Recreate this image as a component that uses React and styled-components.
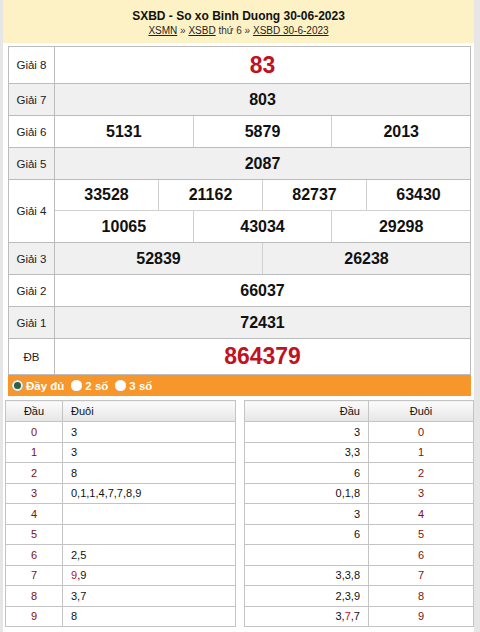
import styled, { createGlobalStyle } from "styled-components";

const GlobalStyle = createGlobalStyle`
  html, body {
    margin: 0;
    padding: 0;
    background: #e6e6e6;
  }
  body {
    font-family: "Liberation Sans", Arial, sans-serif;
  }
`;

const results = [
  { label: "Giải 8", lines: [["83"]], big: true, h: [36] },
  { label: "Giải 7", lines: [["803"]] },
  { label: "Giải 6", lines: [["5131", "5879", "2013"]] },
  { label: "Giải 5", lines: [["2087"]] },
  {
    label: "Giải 4",
    lines: [
      ["33528", "21162", "82737", "63430"],
      ["10065", "43034", "29298"],
    ],
    h: [30, 31],
  },
  { label: "Giải 3", lines: [["52839", "26238"]] },
  { label: "Giải 2", lines: [["66037"]] },
  { label: "Giải 1", lines: [["72431"]] },
  { label: "ĐB", lines: [["864379"]], big: true, h: [35] },
];

// "*" marks the digit that comes from the special prize
const heads = [
  ["3"],
  ["3"],
  ["8"],
  ["0,1,1,4,7,7,8,9"],
  [""],
  [""],
  ["2,5"],
  ["*9", ",9"],
  ["3,7"],
  ["8"],
];

const tails = [
  ["3"],
  ["3,3"],
  ["6"],
  ["0,1,8"],
  ["3"],
  ["6"],
  [""],
  ["3,3,8"],
  ["2,3,9"],
  ["3,", "*7", ",7"],
];

const Page = styled.div`
  width: 471px;
  margin-left: 3px;
  min-height: 632px;
  background: #fff;
  display: flex;
  flex-direction: column;
`;

const Header = styled.div`
  background: #fdf2c6;
  height: 43px;
  display: flex;
  flex-direction: column;
  align-items: center;
  justify-content: center;
  gap: 0;
  padding-top: 1px;
  box-sizing: border-box;
`;

const Title = styled.h1`
  margin: 0;
  font-size: 12px;
  font-weight: bold;
  color: #111;
  line-height: 16px;
`;

const Crumbs = styled.div`
  font-size: 10px;
  color: #333;
  line-height: 13px;

  a {
    color: #222;
    text-decoration: underline;
  }
`;

const ResultTable = styled.div`
  margin: 3px 3px 0 5px;
  border: 1px solid #bcbcbc;
  border-bottom: none;
  display: flex;
  flex-direction: column;
`;

const Row = styled.div`
  display: flex;
  background: ${(p) => (p.shade ? "#f0f0f0" : "#fff")};
  border-bottom: 1px solid #bcbcbc;
`;

const Label = styled.div`
  width: 45px;
  flex-shrink: 0;
  border-right: 1px solid #bcbcbc;
  display: flex;
  align-items: center;
  justify-content: center;
  font-size: 11.5px;
  color: #222;
`;

const Lines = styled.div`
  flex: 1;
  display: flex;
  flex-direction: column;
`;

const Line = styled.div`
  display: flex;
  height: ${(p) => p.h || 31}px;
  & + & {
    border-top: 1px solid #d0d0d0;
  }
`;

const Num = styled.div`
  flex: 1;
  display: flex;
  align-items: center;
  justify-content: center;
  font-weight: bold;
  font-size: ${(p) => (p.big ? "23px" : "16px")};
  color: ${(p) => (p.big ? "#c1121f" : "#111")};
  & + & {
    border-left: 1px solid #d0d0d0;
  }
`;

const OrangeBar = styled.div`
  margin: 0 3px 0 5px;
  height: 21px;
  background: #f7962a;
  display: flex;
  align-items: center;
  padding-left: 4px;
  gap: 5px;
`;

const Option = styled.label`
  display: flex;
  align-items: center;
  gap: 3px;
  color: #fff;
  font-weight: bold;
  font-size: 11.5px;
  margin-right: 2px;
`;

const Radio = styled.span`
  width: 11px;
  height: 11px;
  border-radius: 50%;
  background: ${(p) => (p.checked ? "#335f45" : "#fff")};
  box-shadow: ${(p) =>
    p.checked ? "inset 0 0 0 2px #e8f0ea" : "inset 0 0 0 1px #f3f3f3"};
`;

const Tables = styled.div`
  display: flex;
  justify-content: space-between;
  margin: 4px 0 0 2px;
`;

const LotoTable = styled.table`
  width: ${(p) => p.w}px;
  border-collapse: collapse;
  font-size: 11px;
  color: #111;

  th,
  td {
    border: 1px solid #c4c4c4;
    height: 19.5px;
    padding: 0 8px;
  }

  th {
    font-weight: normal;
    background: linear-gradient(#fbfbfb, #e6e6e6);
    height: 20px;
  }
`;

const Cell = styled.td`
  text-align: ${(p) => p.align || "left"};
  color: ${(p) => (p.red ? "#7d1010" : "#111")};
`;

const Hot = styled.span`
  color: #b3121b;
`;

function Digits({ parts }) {
  return parts.map((part, i) =>
    part.startsWith("*") ? <Hot key={i}>{part.slice(1)}</Hot> : <span key={i}>{part}</span>
  );
}

export default function App() {
  return (
    <>
      <GlobalStyle />
      <Page>
        <Header>
          <Title>SXBD - So xo Binh Duong 30-06-2023</Title>
          <Crumbs>
            <a href="#">XSMN</a> » <a href="#">XSBD</a> thứ 6 »{" "}
            <a href="#">XSBD 30-6-2023</a>
          </Crumbs>
        </Header>

        <ResultTable>
          {results.map((r, idx) => (
            <Row key={r.label} shade={idx % 2 === 1}>
              <Label>{r.label}</Label>
              <Lines>
                {r.lines.map((line, li) => (
                  <Line key={li} h={r.h && r.h[li]}>
                    {line.map((n) => (
                      <Num key={n} big={r.big}>
                        {n}
                      </Num>
                    ))}
                  </Line>
                ))}
              </Lines>
            </Row>
          ))}
        </ResultTable>

        <OrangeBar>
          <Option>
            <Radio checked />
            Đầy đủ
          </Option>
          <Option>
            <Radio />2 số
          </Option>
          <Option>
            <Radio />3 số
          </Option>
        </OrangeBar>

        <Tables>
          <LotoTable w={231}>
            <thead>
              <tr>
                <th style={{ width: 40 }}>Đầu</th>
                <th style={{ textAlign: "left" }}>Đuôi</th>
              </tr>
            </thead>
            <tbody>
              {heads.map((h, i) => (
                <tr key={i}>
                  <Cell align="center" red>
                    {i}
                  </Cell>
                  <Cell>
                    <Digits parts={h} />
                  </Cell>
                </tr>
              ))}
            </tbody>
          </LotoTable>

          <LotoTable w={230}>
            <thead>
              <tr>
                <th style={{ textAlign: "right" }}>Đầu</th>
                <th style={{ width: 88 }}>Đuôi</th>
              </tr>
            </thead>
            <tbody>
              {tails.map((t, i) => (
                <tr key={i}>
                  <Cell align="right">
                    <Digits parts={t} />
                  </Cell>
                  <Cell align="center" red>
                    {i}
                  </Cell>
                </tr>
              ))}
            </tbody>
          </LotoTable>
        </Tables>
      </Page>
    </>
  );
}
